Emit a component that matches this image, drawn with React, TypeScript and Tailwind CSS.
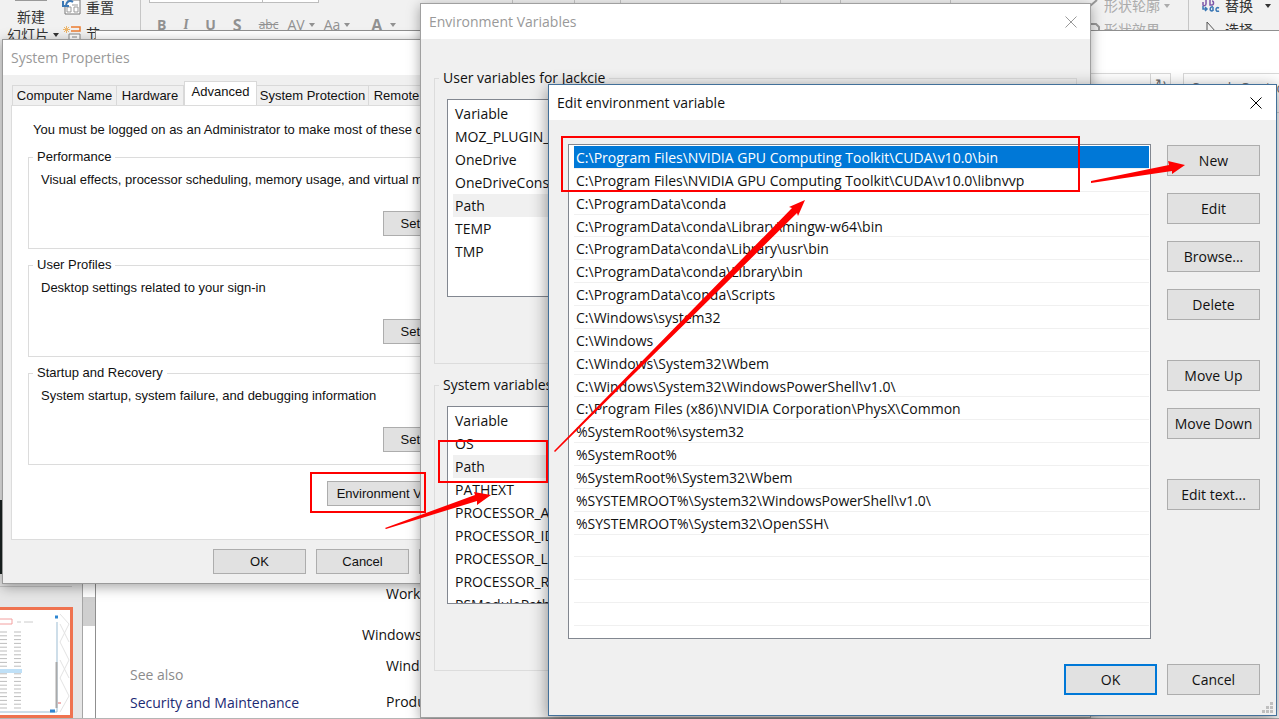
import { ReactNode } from 'react'

const pathEntries = [
  'C:\\Program Files\\NVIDIA GPU Computing Toolkit\\CUDA\\v10.0\\bin',
  'C:\\Program Files\\NVIDIA GPU Computing Toolkit\\CUDA\\v10.0\\libnvvp',
  'C:\\ProgramData\\conda',
  'C:\\ProgramData\\conda\\Library\\mingw-w64\\bin',
  'C:\\ProgramData\\conda\\Library\\usr\\bin',
  'C:\\ProgramData\\conda\\Library\\bin',
  'C:\\ProgramData\\conda\\Scripts',
  'C:\\Windows\\system32',
  'C:\\Windows',
  'C:\\Windows\\System32\\Wbem',
  'C:\\Windows\\System32\\WindowsPowerShell\\v1.0\\',
  'C:\\Program Files (x86)\\NVIDIA Corporation\\PhysX\\Common',
  '%SystemRoot%\\system32',
  '%SystemRoot%',
  '%SystemRoot%\\System32\\Wbem',
  '%SYSTEMROOT%\\System32\\WindowsPowerShell\\v1.0\\',
  '%SYSTEMROOT%\\System32\\OpenSSH\\',
  '',
  '',
  '',
  '',
]

const userVariables = ['MOZ_PLUGIN_PATH', 'OneDrive', 'OneDriveConsumer', 'Path', 'TEMP', 'TMP']

const systemVariables = [
  'OS',
  'Path',
  'PATHEXT',
  'PROCESSOR_ARCHITECTURE',
  'PROCESSOR_IDENTIFIER',
  'PROCESSOR_LEVEL',
  'PROCESSOR_REVISION',
  'PSModulePath',
]

const settingGroups = [
  { title: 'Performance', text: 'Visual effects, processor scheduling, memory usage, and virtual memory' },
  { title: 'User Profiles', text: 'Desktop settings related to your sign-in' },
  { title: 'Startup and Recovery', text: 'System startup, system failure, and debugging information' },
]

const thumbnailRows = Array.from({ length: 21 }, (_, i) => 22 + i * 3.8)

function CloseIcon({ className }: { className: string }) {
  return (
    <svg className={`w-3 h-3 ${className}`} viewBox="0 0 12 12" fill="none" stroke="currentColor">
      <path d="M0.5 0.5l11 11M11.5 0.5l-11 11" />
    </svg>
  )
}

function Caret() {
  return (
    <svg className="w-[6px] h-1 shrink-0" viewBox="0 0 6 4" fill="currentColor">
      <path d="M0 0h6L3 4z" />
    </svg>
  )
}

function DialogButton({ children, primary }: { children: ReactNode; primary?: boolean }) {
  return (
    <button
      type="button"
      className={`w-[93px] h-[31px] shrink-0 bg-[#e1e1e1] text-sm leading-4 whitespace-nowrap ${
        primary ? 'border-2 border-[#0078d7]' : 'border border-[#adadad]'
      }`}
    >
      {children}
    </button>
  )
}

function ClassicButton({ children, className = 'w-[93px]' }: { children: ReactNode; className?: string }) {
  return (
    <button
      type="button"
      className={`h-[25px] shrink-0 border border-[#adadad] bg-[#e1e1e1] whitespace-nowrap ${className}`}
    >
      {children}
    </button>
  )
}

/* PowerPoint ribbon at the very top */
function Ribbon() {
  return (
    <div className="flex justify-between h-10 shrink-0 overflow-hidden bg-[#f1f1f1] text-[#333] text-sm whitespace-nowrap">
      <div className="flex">
        <div className="w-[62px] flex flex-col items-center leading-[18px]">
          <div className="w-8 h-[2px] border border-t-0 border-[#999] bg-white" />
          <span className="pt-[7px]">新建</span>
          <span className="flex items-center gap-1 pl-1">
            幻灯片 <Caret />
          </span>
        </div>
        <div className="w-[78px] flex flex-col gap-[10px]">
          <div className="flex items-start gap-1">
            <svg className="w-5 h-4" viewBox="0 0 20 16" fill="none">
              <path d="M5 0h13v14H3V7" fill="#fff" stroke="#777" />
              <path d="M10 5h6M12 7h4v5h-4zM5 7h4v5H5z" stroke="#999" />
              <path d="M11 2C8 0 5 1 4 5M1 1v5h6" stroke="#3b78b5" strokeWidth="2" />
            </svg>
            <span className="leading-4">重置</span>
          </div>
          <div className="flex items-start gap-1">
            <svg className="w-5 h-4" viewBox="0 0 20 16" fill="none">
              <path d="M2 1l5 5M7 1L2 6M4.500 0v7M1 3.500h7" stroke="#eeb66a" />
              <path d="M9 1h9v4H9" stroke="#ed7d31" strokeWidth="1.500" />
              <path d="M7 16V8h11v8M10 11h5" stroke="#888" fill="#fff" />
            </svg>
            <span className="leading-4">节</span>
          </div>
        </div>
        <div className="w-[280px] border-l border-[#c6c6c6] pl-2">
          <div className="flex h-[3px]">
            <div className="w-[114px] border border-t-0 border-[#bdbdbd] bg-white" />
            <div className="w-14 border border-l-0 border-t-0 border-[#bdbdbd] bg-white" />
          </div>
          <div className="flex items-center gap-[17px] pt-3 pl-2 text-[#919191] leading-5">
            <b>B</b>
            <i className="font-serif font-bold">I</i>
            <span className="underline font-bold">U</span>
            <b className="text-base leading-5">S</b>
            <s className="text-xs leading-5">abc</s>
            <span className="flex items-center gap-1 -ml-2">AV <Caret /></span>
            <span className="flex items-center gap-1 -ml-2">Aa <Caret /></span>
            <span className="flex items-center gap-2 pl-1"><b className="text-base leading-5">A</b> <Caret /></span>
          </div>
        </div>
      </div>
      <div className="flex-1 flex h-1 text-[#aaa]">
        <div className="w-[93px] border-r border-[#c6c6c6]" />
        <div className="w-[62px] border-r border-[#c6c6c6]" />
        <div className="w-[46px] border-r border-[#c6c6c6]" />
        <div className="w-[160px] border-r border-[#c6c6c6]" />
        <div className="w-[60px] border-r border-[#c6c6c6]" />
        <div className="w-[110px] border-r border-[#c6c6c6]" />
      </div>
      <div className="flex leading-3">
        <div className="w-[98px] text-[#ababab] flex gap-1">
          <svg className="w-[10px] h-10" viewBox="0 0 10 40" fill="none" stroke="#999" strokeWidth="2">
            <path d="M0 6l7-6M0 24h6l3 3v5H0" />
          </svg>
          <div className="flex flex-col gap-3">
            <span className="flex items-center gap-1">形状轮廓 <Caret /></span>
            <span>形状效果</span>
          </div>
        </div>
        <div className="w-[91px] border-l border-[#c6c6c6] pl-3 flex gap-1">
          <div className="flex flex-col gap-[10px]">
            <svg className="w-5 h-3" viewBox="0 0 20 12" fill="none">
              <path d="M2 2v3c0 1 3 1 3-1V0M9 0v5h2c2 0 2-4 0-4" stroke="#7e57a8" strokeWidth="1.500" />
              <path d="M2 6v3h4M4 7l2 2-2 2M12 7c-3-1-4 4-1 4l1-1V7v4M18 8c-4-2-4 5 0 3" stroke="#3b78b5" strokeWidth="1.500" />
            </svg>
            <svg className="w-3 h-3 ml-1" viewBox="0 0 12 12" fill="none" stroke="#555">
              <path d="M2 12V0l9 10" />
            </svg>
          </div>
          <div className="flex flex-col gap-3">
            <span className="flex items-center gap-3">替换 <Caret /></span>
            <span>选择</span>
          </div>
        </div>
      </div>
    </div>
  )
}

/* Slide thumbnails left of the control panel */
function SlideStrip() {
  return (
    <div className="w-[95px] shrink-0 flex bg-[#e6e6e6]">
      <div className="w-[83px] flex flex-col border-r border-[#a5a5a5]">
        <div className="grow flex flex-col justify-end w-[72px] border-b border-[#c4c4c4] pb-3">
          <div className="h-[74px] bg-[#1b2422]" />
        </div>
        <div className="h-5 shrink-0" />
        <div className="h-[111px] w-[73px] shrink-0 border-3 border-l-0 border-[#ef7350] bg-white">
          <svg className="w-full h-full" viewBox="0 0 70 105" fill="none">
            <path d="M60 4l9 10-9 18 9 18-9 18 9 18-9 16M60 14l9 18M60 50l9 18" stroke="#e3e3e3" />
            <path d="M0 14h12v-5H0" stroke="#f3a0a0" />
            <path d="M17 12h4M24 12h9" stroke="#ccc" />
            {thumbnailRows.map((y) => (
              <path key={y} d={`M0 ${y}h7M14 ${y}h7`} stroke="#bdbdbd" />
            ))}
            <path d="M0 61h22" stroke="#bfe0f7" strokeWidth="4" />
            <path d="M57 12v90H0" stroke="#9dbdd3" />
            <path d="M55 7h3M50 101h5" stroke="#2e86d1" strokeWidth="3" />
            <path d="M56.500 52v46" stroke="#aaa" strokeWidth="2" />
            <path d="M58 93h3" stroke="#d66" />
          </svg>
        </div>
      </div>
      <div className="flex-1 flex flex-col justify-end bg-white">
        <div className="h-[29px] bg-[#cfcfcf] mb-[92px]" />
      </div>
    </div>
  )
}

/* System page of the control panel */
function ControlPanel() {
  return (
    <div className="relative -mt-[10px] flex-1 flex flex-col border-l border-t border-[#8f8f8f] bg-white text-sm">
      <div className="h-[42px] shrink-0" />
      <div className="flex justify-end gap-3 h-10 shrink-0 text-[#6d6d6d]">
        <div className="w-[300px] border border-[#d9d9d9] flex justify-end">
          <span className="w-5 border-l border-[#d9d9d9] pl-1">↻</span>
        </div>
        <div className="w-24 border border-r-0 border-[#d9d9d9] pl-2 pt-1 whitespace-nowrap overflow-hidden">
          Search Control Panel
        </div>
      </div>
      <div className="grow flex items-end">
        <div className="w-[231px] pl-[34px] pb-[5px] flex flex-col gap-2 leading-5">
          <span className="text-[#8b8b8b]">See also</span>
          <a href="#security" className="text-[#1b2a74]">Security and Maintenance</a>
        </div>
        <div className="pl-[35px] pb-[6px] flex flex-col leading-5 whitespace-nowrap">
          <span className="pl-6 pb-[21px]">Workgroup:</span>
          <span className="pb-[11px]">Windows activation</span>
          <span className="pl-6 pb-4">Windows is activated</span>
          <span className="pl-6">Product ID:</span>
        </div>
      </div>
    </div>
  )
}

function SystemProperties() {
  return (
    <section className="absolute left-[2px] top-[39px] w-[522px] h-[545px] flex flex-col border border-[#9a9a9a] bg-[#f0f0f0] shadow-[0_3px_12px_rgba(0,0,0,0.35)] text-[13px] font-['Liberation_Sans',Arial,sans-serif]">
      <header className="h-[35px] shrink-0 bg-white px-2 flex items-center text-sm text-[#999] font-['Open_Sans',sans-serif]">
        System Properties
      </header>
      <div role="tablist" className="flex items-end h-[30px] shrink-0 px-[9px] leading-4 whitespace-nowrap">
        <button type="button" role="tab" className="h-5 w-[105px] border border-b-0 border-[#d9d9d9]">Computer Name</button>
        <button type="button" role="tab" className="h-5 w-[67px] border border-b-0 border-l-0 border-[#d9d9d9]">Hardware</button>
        <button type="button" role="tab" aria-selected="true" className="h-6 w-[73px] pb-1 border border-b-0 border-[#d9d9d9] bg-white">Advanced</button>
        <button type="button" role="tab" className="h-5 w-[112px] border border-b-0 border-l-0 border-[#d9d9d9]">System Protection</button>
        <button type="button" role="tab" className="h-5 w-[56px] border border-b-0 border-l-0 border-[#d9d9d9]">Remote</button>
      </div>
      <div className="mx-2 h-[435px] shrink-0 border border-[#dcdcdc] bg-white px-4 pt-4 flex flex-col whitespace-nowrap">
        <p className="pl-[5px] leading-4">You must be logged on as an Administrator to make most of these changes.</p>
        <div className="pt-[11px] flex flex-col gap-2">
          {settingGroups.map((group) => (
            <fieldset key={group.title} className="h-[100px] border border-[#dcdcdc] px-3">
              <legend className="px-1 -ml-2 leading-4">{group.title}</legend>
              <p className="pt-[7px] leading-4">{group.text}</p>
              <div className="flex justify-end pt-[23px] pr-[9px]">
                <ClassicButton>Settings...</ClassicButton>
              </div>
            </fieldset>
          ))}
        </div>
        <div className="pt-4 pr-[11px] flex justify-end">
          <ClassicButton className="w-[160px]">Environment Variables...</ClassicButton>
        </div>
      </div>
      <footer className="flex justify-end gap-[10px] pt-[9px] pr-[11px]">
        <ClassicButton>OK</ClassicButton>
        <ClassicButton>Cancel</ClassicButton>
        <ClassicButton>Apply</ClassicButton>
      </footer>
    </section>
  )
}

function VariableGroup({ title, names }: { title: string; names: string[] }) {
  return (
    <fieldset className="h-[296px] border border-[#dcdcdc] px-3">
      <legend className="px-1 -ml-2 leading-5">{title}</legend>
      <div className="mt-[11px] h-[198px] overflow-hidden border border-[#828790] bg-white pl-[5px] pt-[2px]">
        <table className="w-full text-left">
          <thead>
            <tr className="h-[23px]">
              <th className="font-normal px-[2px] py-0 leading-5">Variable</th>
            </tr>
          </thead>
          <tbody>
            {names.map((name) => (
              <tr key={name} className={`h-[23px] ${name === 'Path' ? 'bg-[#f0f0f0]' : ''}`}>
                <td className="px-[2px] py-0 leading-5">{name}</td>
              </tr>
            ))}
          </tbody>
        </table>
      </div>
    </fieldset>
  )
}

function EnvironmentVariables() {
  return (
    <section className="absolute left-[420px] top-[3px] w-[671px] h-[715px] flex flex-col border border-[#a0a0a0] bg-[#f0f0f0] shadow-[0_3px_12px_rgba(0,0,0,0.35)] text-sm">
      <header className="h-[35px] shrink-0 bg-white px-2 flex items-center justify-between text-[#999]">
        Environment Variables
        <button type="button" aria-label="Close" className="pr-[5px]">
          <CloseIcon className="text-[#999]" />
        </button>
      </header>
      <div className="px-[13px] pt-[29px] flex flex-col gap-[11px]">
        <VariableGroup title="User variables for Jackcie" names={userVariables} />
        <VariableGroup title="System variables" names={systemVariables} />
      </div>
    </section>
  )
}

function EditVariable() {
  return (
    <section className="absolute left-[548px] right-[2px] top-[84px] flex flex-col border border-[#42709a] bg-[#f0f0f0] shadow-[0_4px_16px_rgba(0,0,0,0.45)] text-sm">
      <header className="h-[35px] bg-white pl-2 pr-[14px] flex items-center justify-between">
        Edit environment variable
        <button type="button" aria-label="Close">
          <CloseIcon className="text-black" />
        </button>
      </header>
      <div className="flex gap-4 pl-[19px] pr-4 pt-6">
        <div className="flex-1 h-[495px] border border-[#828790] bg-white px-[1px] pt-[1px]">
          <ul className="h-[480px] flex flex-col">
            {pathEntries.map((entry, i) => (
              <li
                key={i}
                className={`flex-1 min-h-0 flex items-center ml-1 pl-[2px] pt-[2px] border-b border-[#f0f0f0] leading-5 whitespace-nowrap ${
                  i === 0 ? 'bg-[#0078d7] text-white' : ''
                }`}
              >
                {entry}
              </li>
            ))}
          </ul>
        </div>
        <div className="flex flex-col gap-[17px] pt-[1px]">
          <DialogButton>New</DialogButton>
          <DialogButton>Edit</DialogButton>
          <DialogButton>Browse...</DialogButton>
          <DialogButton>Delete</DialogButton>
          <div className="pt-[23px] flex flex-col gap-[17px]">
            <DialogButton>Move Up</DialogButton>
            <DialogButton>Move Down</DialogButton>
          </div>
          <div className="pt-[23px]">
            <DialogButton>Edit text...</DialogButton>
          </div>
        </div>
      </div>
      <footer className="flex justify-end gap-[10px] pr-4 pt-[25px] pb-5">
        <DialogButton primary>OK</DialogButton>
        <DialogButton>Cancel</DialogButton>
      </footer>
      <svg className="absolute right-[2px] bottom-[1px] w-3 h-3" viewBox="0 0 12 12" fill="#bfbfbf">
        <path d="M8 0h3v3H8zM4 4h3v3H4zM8 4h3v3H8zM0 8h3v3H0zM4 8h3v3H4zM8 8h3v3H8z" />
      </svg>
    </section>
  )
}

/* Red boxes and arrows drawn over the dialogs */
function Annotations() {
  return (
    <svg className="absolute left-0 top-0 w-[1279px] h-[719px] pointer-events-none" viewBox="0 0 1279 719" fill="none">
      <g stroke="#fe0000" strokeWidth="2">
        <rect x="562" y="137" width="517" height="54" />
        <rect x="439" y="441" width="108" height="41" />
        <rect x="311" y="473" width="114" height="39" />
      </g>
      <g fill="#fe0000">
        <path d="M554 451L792 208l-3-1 16-7-7 16-1-3L555 452z" />
        <path d="M385 528l90-33-1-3 17 3-14 10v-4l-91 28z" />
        <path d="M1091 181l78-16-1-4 17 4-13 9v-3l-81 12z" />
      </g>
    </svg>
  )
}

export default function App() {
  return (
    <main className="relative h-screen min-h-[719px] overflow-hidden flex flex-col bg-[#e6e6e6] text-[#111] font-['Open_Sans','Noto_Sans_CJK_SC',sans-serif]">
      <Ribbon />
      <div className="grow flex border-b border-[#b5b5b5]">
        <SlideStrip />
        <ControlPanel />
      </div>
      <SystemProperties />
      <EnvironmentVariables />
      <EditVariable />
      <Annotations />
    </main>
  )
}
